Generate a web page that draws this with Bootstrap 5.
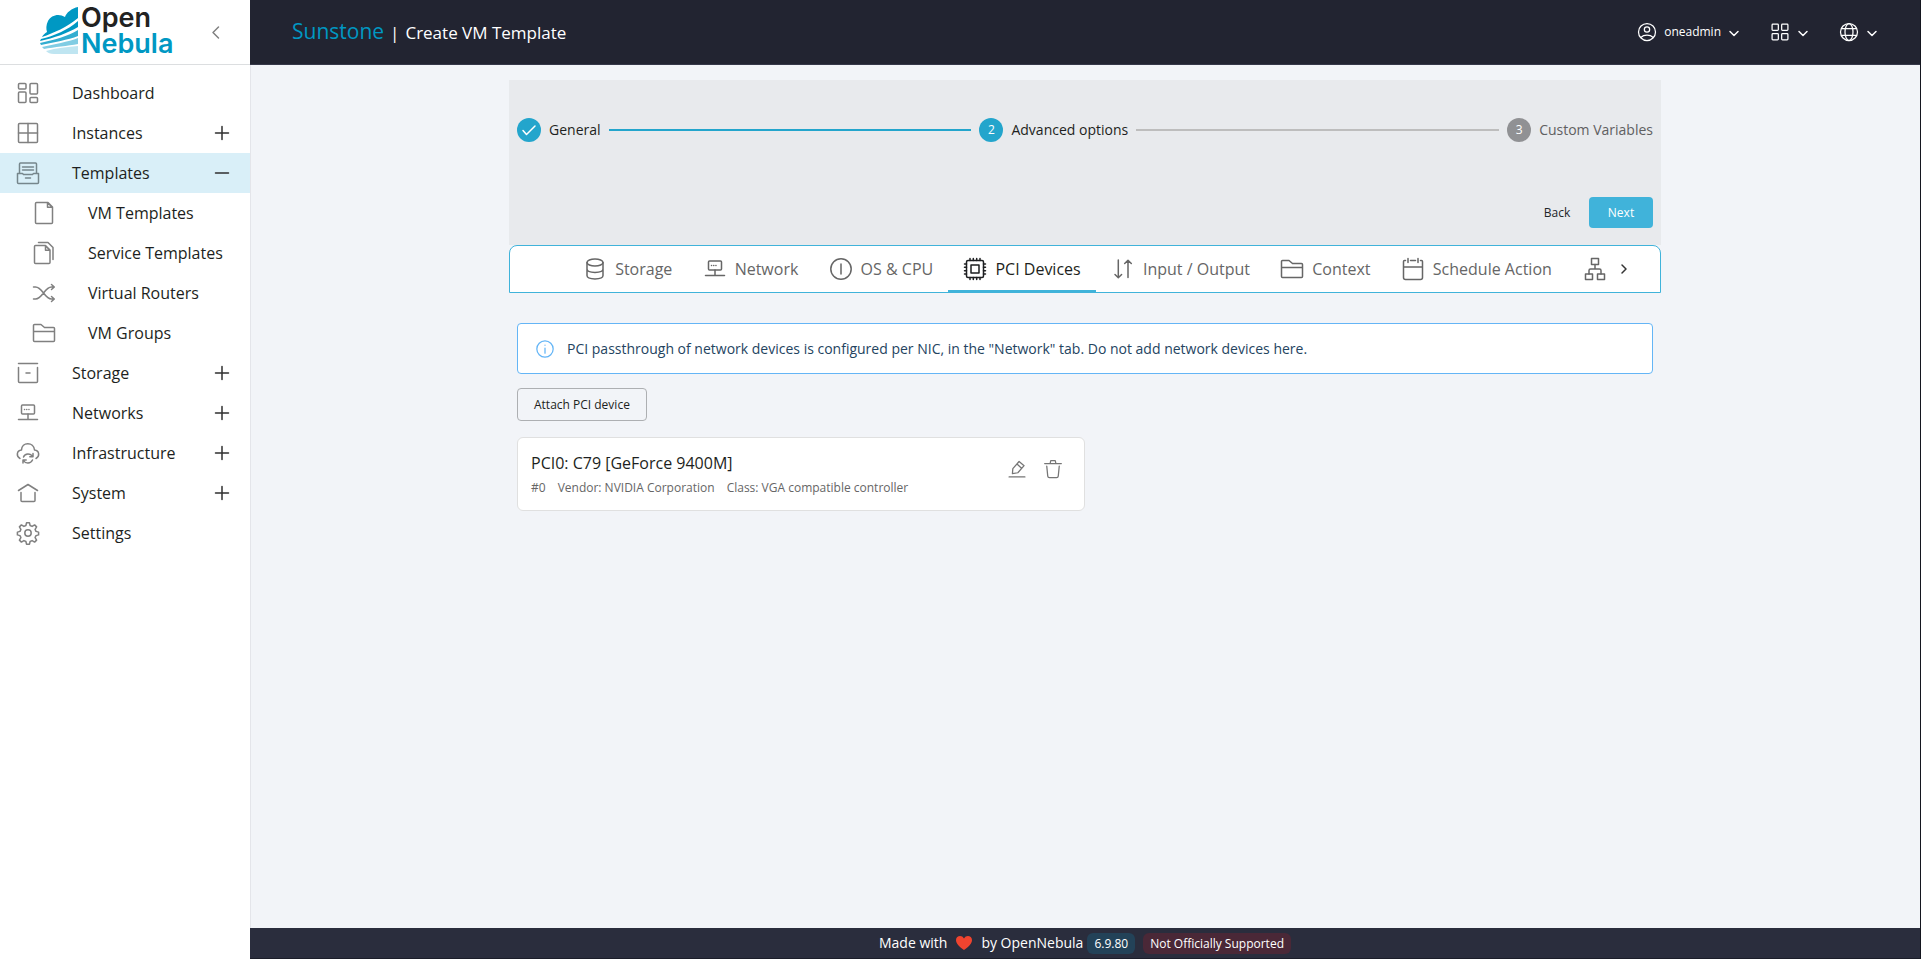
<!DOCTYPE html>
<html lang="en">
<head>
<meta charset="utf-8">
<meta name="viewport" content="width=device-width, initial-scale=1">
<title>Sunstone | Create VM Template</title>
<link href="https://cdn.jsdelivr.net/npm/bootstrap@5.3.0/dist/css/bootstrap.min.css" rel="stylesheet">
<style>
  :root { --brand: #40b3da; --brand-deep: #0098c3; --ink: #1d1f21; --muted: #666; }
  body { font-family: "Open Sans", "Noto Sans", sans-serif; font-size: 16px; line-height: 24px; color: var(--ink); background: #f2f4f8; }
  a { color: inherit; text-decoration: none; }
  .app-shell { border-right: 1px solid #14161f; }
  .ico { width: 24px; height: 24px; flex: none; fill: none; stroke: currentColor; stroke-width: 1.5; stroke-linecap: round; stroke-linejoin: round; }
  .ico-sm { width: 20px; height: 20px; }
  .ico-xs { width: 12px; height: 12px; }

  /* side navigation */
  .side { width: 250px; flex: none; background: #fff; }
  .side-head { height: 65px; border-bottom: 1px solid #dcdee0; padding-left: 40px; padding-right: 24px; }
  .side .ico { color: #808080; }
  .side .ico.toggle { color: #2f2f2f; }
  .side-link { height: 40px; padding: 0 16px; color: var(--ink); }
  .side-link .label { margin-left: 32px; }
  .side-link.sub { padding-left: 32px; }
  .side-link.active { background: #d9eff8; }
  .side-link.active .ico:first-child { color: #76868c; }

  /* top bar */
  .topbar { height: 65px; background: #222431; border-bottom: 1px solid #363849; color: #fff; padding: 0 42px; }
  .app-title { gap: 6px; }
  .app-name { font-size: 21px; color: var(--brand-deep); }
  .page-name { font-size: 17px; }
  .topbar button { color: #fff; font-size: 12px; line-height: 20px; gap: 7px; }
  .top-tools { gap: 30px; }

  .content { box-shadow: inset 1px 0 #e4e5ea; padding-top: 15px; }
  .wizard { max-width: 1152px; }

  .steps-panel { background: #e8eaed; padding: 38px 8px 17px; }
  .step { font-size: 14px; gap: 8px; height: 24px; }
  .step-dot { width: 24px; height: 24px; background: #23a5cc; color: #fff; font-size: 12px; }
  .step.pending { color: #5f6061; }
  .step.pending .step-dot { background: #909194; }
  .step-line { height: 2px; background: #bdbdbd; margin: 0 8px; }
  .step-line.done { background: #23a5cc; }
  .step-actions { margin-top: 55px; }
  .btn-sun { --bs-btn-font-size: 12px; --bs-btn-line-height: 19px; --bs-btn-padding-y: 6px; --bs-btn-border-radius: 4px; --bs-btn-border-width: 0; width: 64px; padding-left: 0; padding-right: 0; }
  .btn-next { --bs-btn-bg: #40b3da; --bs-btn-color: #fff; --bs-btn-hover-bg: #2a9fc8; --bs-btn-hover-color: #fff; }

  .tabbar { height: 48px; background: #fff; border: 1px solid var(--brand); border-radius: 8px 8px 0 0; padding: 0 19px 0 58px; }
  .tabbar .tab { flex: 1 1 auto; height: 46px; padding: 2px 12px 0; gap: 8px; color: var(--muted); background: none; border: 0; border-bottom: 2px solid transparent; white-space: nowrap; }
  .tabbar .tab.active { color: var(--ink); border-bottom-color: var(--brand); }
  .tabbar .tab.cut { flex: none; padding: 2px 0 0 16px; }
  .tabbar .next-tabs { flex: none; color: #333; background: none; border: 0; width: 34px; }

  .panel { padding: 30px 8px; }
  .notice { background: #fff; border: 1px solid #64b5f6; border-radius: 4px; height: 51px; padding: 0 17px; font-size: 14px; color: #24445f; gap: 12px; margin-bottom: 14px; }
  .notice .ico { color: #64b5f6; }
  .btn-attach { --bs-btn-font-size: 12px; --bs-btn-line-height: 19px; --bs-btn-padding-y: 6px; --bs-btn-padding-x: 16px; --bs-btn-border-color: #adafb2; --bs-btn-color: #1d1f21; --bs-btn-border-radius: 4px; }
  .device { border: 1px solid #e0e0e0; border-radius: 6px; padding: 12px 13px 10px; }
  .device h2 { font-size: 16px; line-height: 26px; margin: 0; font-weight: 400; }
  .device .meta { font-size: 12px; line-height: 24px; gap: 12px; color: var(--muted); }
  .device .tool { background: none; border: 0; padding: 9px 8px; color: #757575; line-height: 0; }

  .foot { height: 31px; background: #2a2d3d; border-bottom: 1px solid #1b1d29; color: #fff; font-size: 14px; }
  .foot .chip { font-size: 12px; line-height: 21px; padding: 0 7px; border-radius: 6px; }
  .chip-version { background: #234258; }
  .chip-support { background: #4a2837; }
</style>
</head>
<body>
<svg width="0" height="0" class="d-none" aria-hidden="true">
  <symbol id="i-dash" viewBox="0 0 24 24"><rect x="2.5" y="2.5" width="7.5" height="5.5" rx="1"/><rect x="14" y="2.5" width="7.5" height="10.5" rx="1"/><rect x="2.5" y="11" width="7.5" height="10.5" rx="1"/><rect x="14" y="16.5" width="7.5" height="5" rx="1"/></symbol>
  <symbol id="i-inst" viewBox="0 0 24 24"><rect x="2.5" y="2.5" width="19" height="19" rx="1"/><path d="M12 2.5v19M2.5 12h19"/></symbol>
  <symbol id="i-tmpl" viewBox="0 0 24 24"><path d="M3.5 12V3a1 1 0 0 1 1-1h15a1 1 0 0 1 1 1v9M6.5 6h11M6.5 9h11M9.500 17h5"/><path d="M1.500 12.500h5l1 1h9l1-1h5v9a1 1 0 0 1-1 1h-19a1 1 0 0 1-1-1z"/></symbol>
  <symbol id="i-page" viewBox="0 0 24 24"><path d="M3.500 2.500a1 1 0 0 1 1-1h11.500l4.500 4.500v15.500a1 1 0 0 1-1 1h-15a1 1 0 0 1-1-1zM15.500 1.800v4.500h4.800z"/></symbol>
  <symbol id="i-pages" viewBox="0 0 24 24"><path d="M2.500 5.500a1 1 0 0 1 1-1h10l4.500 4.500v12.500a1 1 0 0 1-1 1h-13.500a1 1 0 0 1-1-1zM13.500 4.800v4.500h4.300zM6.500 1.500h9.500l5 5v12"/></symbol>
  <symbol id="i-shuf" viewBox="0 0 24 24"><path d="M1.500 6h2c7 0 9 12 16 12h2.500M1.500 18h2c7 0 9-12 16-12h2.500M19.500 3.500l2.800 2.500-2.800 2.500M19.500 15.500l2.800 2.500-2.800 2.500"/></symbol>
  <symbol id="i-fold" viewBox="0 0 24 24"><path d="M1.500 19.500v-15a1 1 0 0 1 1-1h6.500l3.500 3h9a1 1 0 0 1 1 1v12a1 1 0 0 1-1 1h-19a1 1 0 0 1-1-1zM1.500 10.500h21"/></symbol>
  <symbol id="i-box" viewBox="0 0 24 24"><path d="M2.500 2.500h19M2.500 6.500v14a1 1 0 0 0 1 1h17a1 1 0 0 0 1-1v-14M10 12h4"/></symbol>
  <symbol id="i-net" viewBox="0 0 24 24"><rect x="5.500" y="4" width="13" height="9" rx="1"/><path d="M12 13v5.500M2.500 18.500h19M8.500 8.500h.1M10.700 8.500h.1M12.900 8.500h.1"/></symbol>
  <symbol id="i-cloud" viewBox="0 0 24 24"><path d="M4 17.500c-4-2-3.500-8 1.500-8.500 0-8.500 12.500-8.500 13 0 5 .5 5.500 6.500 1.500 8.500M7.500 16c1.500-4 7-4 9-.5M16.500 19c-2 4-7 4-9 .5M17 12.500v3.300h-3.200M7 22v-3h3.200"/></symbol>
  <symbol id="i-home" viewBox="0 0 24 24"><path d="M2.500 9.500l9.500-6 9.500 6M5 11.500v8a1 1 0 0 0 1 1h12a1 1 0 0 0 1-1v-8"/></symbol>
  <symbol id="i-gear" viewBox="0 0 24 24"><circle cx="12" cy="12" r="3.200"/><path d="M10.500 1.800h3l.6 2.700 2 .9 2.500-1.500 2 2-1.500 2.500.9 2 2.600.7v2.800l-2.600.7-.9 2 1.500 2.500-2 2-2.500-1.500-2 .9-.6 2.700h-3l-.6-2.700-2-.9-2.500 1.500-2-2 1.500-2.500-.9-2-2.600-.7v-2.800l2.600-.7.9-2-1.500-2.500 2-2 2.500 1.500 2-.9z"/></symbol>
  <symbol id="i-plus" viewBox="0 0 24 24"><path d="M5.500 12h13M12 5.500v13"/></symbol>
  <symbol id="i-minus" viewBox="0 0 24 24"><path d="M5.500 12h13"/></symbol>
  <symbol id="i-down" viewBox="0 0 12 12"><path d="M2 5.500l4 4 4-4"/></symbol>
  <symbol id="i-user" viewBox="0 0 24 24"><circle cx="12" cy="12" r="10.200"/><circle cx="12" cy="9" r="3.200"/><path d="M4.500 18.500c4-3.500 11-3.500 15 0"/></symbol>
  <symbol id="i-apps" viewBox="0 0 24 24"><rect x="2.500" y="2.500" width="7.500" height="7.500" rx="1"/><rect x="14" y="2.500" width="7.500" height="7.500" rx="1"/><rect x="2.500" y="14" width="7.500" height="7.500" rx="1"/><rect x="14" y="14" width="7.500" height="7.500" rx="1"/></symbol>
  <symbol id="i-globe" viewBox="0 0 24 24"><circle cx="12" cy="12" r="10.200"/><ellipse cx="12" cy="12" rx="4.800" ry="10.200"/><path d="M3 8h18M3 16h18"/></symbol>
  <symbol id="i-disk" viewBox="0 0 24 24"><ellipse cx="12" cy="5.500" rx="8" ry="3.500"/><path d="M4 5.500v13c0 4.500 16 4.500 16 0v-13M4 12c0 4.500 16 4.500 16 0"/></symbol>
  <symbol id="i-os" viewBox="0 0 24 24"><circle cx="12" cy="12" r="10.200"/><path d="M12 7v10"/></symbol>
  <symbol id="i-chip" viewBox="0 0 24 24"><rect x="3.500" y="3.500" width="17" height="17" rx="1.500"/><rect x="8" y="8" width="8" height="8"/><path d="M7 3.500v-2M10.300 3.500v-2M13.700 3.500v-2M17 3.500v-2M7 22.500v-2M10.300 22.500v-2M13.700 22.500v-2M17 22.500v-2M3.500 7h-2M3.500 10.300h-2M3.500 13.700h-2M3.500 17h-2M22.500 7h-2M22.500 10.300h-2M22.500 13.700h-2M22.500 17h-2"/></symbol>
  <symbol id="i-io" viewBox="0 0 24 24"><path d="M7.300 3v17.500M4 17.500l3.300 3.200 3.300-3.200M17 20.500V3.300M13.700 6.500L17 3.200l3.300 3.300"/></symbol>
  <symbol id="i-cal" viewBox="0 0 24 24"><path d="M4.500 3.500h-1a1 1 0 0 0-1 1v16a2 2 0 0 0 2 2h15a2 2 0 0 0 2-2v-16a1 1 0 0 0-1-1h-1M9.500 3.500h5M7 1.500v4M17 1.500v4M2.500 10h19"/></symbol>
  <symbol id="i-tree" viewBox="0 0 24 24"><rect x="8.500" y="1.500" width="7" height="6"/><rect x="2.500" y="17" width="7" height="5.500"/><rect x="14.500" y="17" width="7" height="5.500"/><path d="M12 7.500v4.500M6 17v-3.500a1.500 1.500 0 0 1 1.500-1.500h9a1.500 1.500 0 0 1 1.500 1.500v3.500"/></symbol>
  <symbol id="i-info" viewBox="0 0 24 24"><circle cx="12" cy="12" r="9.800"/><path d="M12 11v6M12 7.300v.1"/></symbol>
  <symbol id="i-edit" viewBox="0 0 24 24"><path d="M2.500 21.500h19M6.500 17.500l.5-6L14.500 3l6 5-7.500 8.500zM12 6l5.500 5"/></symbol>
  <symbol id="i-trash" viewBox="0 0 24 24"><path d="M2 5.500h20M8.500 5.500l.8-3.500h5.400l.8 3.500M4.500 8.500l1.200 12a2 2 0 0 0 2 1.800h8.600a2 2 0 0 0 2-1.800l1.200-12"/></symbol>
</svg>

<div class="app-shell d-flex min-vh-100">
  <aside class="side d-flex flex-column">
    <div class="side-head d-flex align-items-center justify-content-between">
      <a href="#" class="d-block lh-1" aria-label="OpenNebula">
        <svg class="d-block" width="140" height="64" viewBox="0 0 140 64">
          <path d="M38 7C32 8 26 13 25 17C19 13 11 15 8 21C6 25 6 29 7 32C5 33 3 35 2 37C14 33 27 27 38 18Z" fill="#0098c3"/>
          <path d="M1 39C14 36 28 30 38 21V27C28 33 14 38 0 41Z" fill="#0098c3"/>
          <path d="M0 43C14 40 28 36 38 30V36C28 40 14 42 1 45Z" fill="#33add0"/>
          <path d="M2 47C14 44 28 42 38 38V44C28 46 14 47 4 49Z" fill="#80cce3"/>
          <path d="M6 51C16 48 28 47 38 46V54H14C10 54 8 53 6 51Z" fill="#bfe5f1"/>
          <text x="41" y="27" font-family="Inter, sans-serif" font-weight="600" font-size="27" fill="#222">Open</text>
          <text x="41" y="53" font-family="Inter, sans-serif" font-weight="600" font-size="27" fill="#0098c3">Nebula</text>
        </svg>
      </a>
      <button type="button" class="btn p-0 border-0 lh-1" aria-label="Collapse menu"><svg class="ico ico-sm" viewBox="0 0 20 20"><path d="M12.500 5l-5.500 5.500 5.500 5.500"/></svg></button>
    </div>
    <nav class="d-flex flex-column pt-2">
      <a href="#" class="side-link d-flex align-items-center"><svg class="ico"><use href="#i-dash"/></svg><span class="label">Dashboard</span></a>
      <a href="#" class="side-link d-flex align-items-center"><svg class="ico"><use href="#i-inst"/></svg><span class="label">Instances</span><svg class="ico toggle ms-auto"><use href="#i-plus"/></svg></a>
      <a href="#" class="side-link active d-flex align-items-center"><svg class="ico"><use href="#i-tmpl"/></svg><span class="label">Templates</span><svg class="ico toggle ms-auto"><use href="#i-minus"/></svg></a>
      <a href="#" class="side-link sub d-flex align-items-center"><svg class="ico"><use href="#i-page"/></svg><span class="label">VM Templates</span></a>
      <a href="#" class="side-link sub d-flex align-items-center"><svg class="ico"><use href="#i-pages"/></svg><span class="label">Service Templates</span></a>
      <a href="#" class="side-link sub d-flex align-items-center"><svg class="ico"><use href="#i-shuf"/></svg><span class="label">Virtual Routers</span></a>
      <a href="#" class="side-link sub d-flex align-items-center"><svg class="ico"><use href="#i-fold"/></svg><span class="label">VM Groups</span></a>
      <a href="#" class="side-link d-flex align-items-center"><svg class="ico"><use href="#i-box"/></svg><span class="label">Storage</span><svg class="ico toggle ms-auto"><use href="#i-plus"/></svg></a>
      <a href="#" class="side-link d-flex align-items-center"><svg class="ico"><use href="#i-net"/></svg><span class="label">Networks</span><svg class="ico toggle ms-auto"><use href="#i-plus"/></svg></a>
      <a href="#" class="side-link d-flex align-items-center"><svg class="ico"><use href="#i-cloud"/></svg><span class="label">Infrastructure</span><svg class="ico toggle ms-auto"><use href="#i-plus"/></svg></a>
      <a href="#" class="side-link d-flex align-items-center"><svg class="ico"><use href="#i-home"/></svg><span class="label">System</span><svg class="ico toggle ms-auto"><use href="#i-plus"/></svg></a>
      <a href="#" class="side-link d-flex align-items-center"><svg class="ico"><use href="#i-gear"/></svg><span class="label">Settings</span></a>
    </nav>
  </aside>

  <div class="d-flex flex-column flex-grow-1">
    <header class="topbar d-flex align-items-center">
      <div class="app-title d-flex align-items-baseline">
        <a href="#" class="app-name">Sunstone</a>
        <span class="page-name">|</span>
        <span class="page-name">Create VM Template</span>
      </div>
      <div class="top-tools d-flex align-items-center ms-auto">
        <button type="button" class="btn p-0 border-0 d-flex align-items-center"><svg class="ico ico-sm"><use href="#i-user"/></svg>oneadmin<svg class="ico ico-xs"><use href="#i-down"/></svg></button>
        <button type="button" class="btn p-0 border-0 d-flex align-items-center" aria-label="Views"><svg class="ico ico-sm"><use href="#i-apps"/></svg><svg class="ico ico-xs"><use href="#i-down"/></svg></button>
        <button type="button" class="btn p-0 border-0 d-flex align-items-center" aria-label="Zone"><svg class="ico ico-sm"><use href="#i-globe"/></svg><svg class="ico ico-xs"><use href="#i-down"/></svg></button>
      </div>
    </header>

    <main class="content flex-grow-1">
      <div class="wizard mx-auto">
        <section class="steps-panel">
          <div class="d-flex align-items-center">
            <div class="step d-flex align-items-center"><span class="step-dot rounded-circle d-flex align-items-center justify-content-center"><svg class="ico ico-sm" viewBox="0 0 20 20"><path d="M4 10.500l3.500 4L16 6"/></svg></span>General</div>
            <div class="step-line done flex-fill"></div>
            <div class="step d-flex align-items-center"><span class="step-dot rounded-circle d-flex align-items-center justify-content-center">2</span>Advanced options</div>
            <div class="step-line flex-fill"></div>
            <div class="step pending d-flex align-items-center"><span class="step-dot rounded-circle d-flex align-items-center justify-content-center">3</span>Custom Variables</div>
          </div>
          <div class="step-actions d-flex justify-content-end">
            <button type="button" class="btn btn-sun">Back</button>
            <button type="button" class="btn btn-sun btn-next">Next</button>
          </div>
        </section>

        <div class="tabbar d-flex" role="tablist">
          <button type="button" role="tab" class="tab d-flex align-items-center justify-content-center"><svg class="ico"><use href="#i-disk"/></svg>Storage</button>
          <button type="button" role="tab" class="tab d-flex align-items-center justify-content-center"><svg class="ico"><use href="#i-net"/></svg>Network</button>
          <button type="button" role="tab" class="tab d-flex align-items-center justify-content-center"><svg class="ico"><use href="#i-os"/></svg>OS &amp; CPU</button>
          <button type="button" role="tab" class="tab active d-flex align-items-center justify-content-center" aria-selected="true"><svg class="ico"><use href="#i-chip"/></svg>PCI Devices</button>
          <button type="button" role="tab" class="tab d-flex align-items-center justify-content-center"><svg class="ico"><use href="#i-io"/></svg>Input / Output</button>
          <button type="button" role="tab" class="tab d-flex align-items-center justify-content-center"><svg class="ico"><use href="#i-fold"/></svg>Context</button>
          <button type="button" role="tab" class="tab d-flex align-items-center justify-content-center"><svg class="ico"><use href="#i-cal"/></svg>Schedule Action</button>
          <button type="button" role="tab" class="tab cut d-flex align-items-center" aria-label="Placement"><svg class="ico"><use href="#i-tree"/></svg></button>
          <button type="button" class="next-tabs d-flex align-items-center justify-content-center p-0" aria-label="More tabs"><svg class="ico ico-xs" viewBox="0 0 12 12"><path d="M4 2l4 4-4 4"/></svg></button>
        </div>

        <section class="panel">
          <div class="notice d-flex align-items-center" role="status"><svg class="ico ico-sm"><use href="#i-info"/></svg>PCI passthrough of network devices is configured per NIC, in the "Network" tab. Do not add network devices here.</div>
          <button type="button" class="btn btn-attach">Attach PCI device</button>
          <div class="row g-0 mt-3">
            <div class="col-6">
              <article class="device bg-white d-flex align-items-start justify-content-between">
                <div>
                  <h2>PCI0: C79 [GeForce 9400M]</h2>
                  <div class="meta d-flex"><span>#0</span><span>Vendor: NVIDIA Corporation</span><span>Class: VGA compatible controller</span></div>
                </div>
                <div class="d-flex">
                  <button type="button" class="tool" aria-label="Edit"><svg class="ico ico-sm"><use href="#i-edit"/></svg></button>
                  <button type="button" class="tool" aria-label="Delete"><svg class="ico ico-sm"><use href="#i-trash"/></svg></button>
                </div>
              </article>
            </div>
          </div>
        </section>
      </div>
    </main>

    <footer class="foot d-flex align-items-center justify-content-center">
      <span>Made with</span>
      <svg class="mx-2" width="18" height="16" viewBox="0 0 18 16" role="img" aria-label="love"><path d="M9 15C4 11.500 1 8.500 1 5 1 .5 7-.5 9 3.500 11-.5 17 .5 17 5c0 3.500-3 6.500-8 10z" fill="#f0442f"/></svg>
      <a href="#">by OpenNebula</a>
      <span class="chip chip-version ms-1">6.9.80</span>
      <span class="chip chip-support ms-2">Not Officially Supported</span>
    </footer>
  </div>
</div>
<script src="https://cdn.jsdelivr.net/npm/bootstrap@5.3.0/dist/js/bootstrap.bundle.min.js"></script>
</body>
</html>
